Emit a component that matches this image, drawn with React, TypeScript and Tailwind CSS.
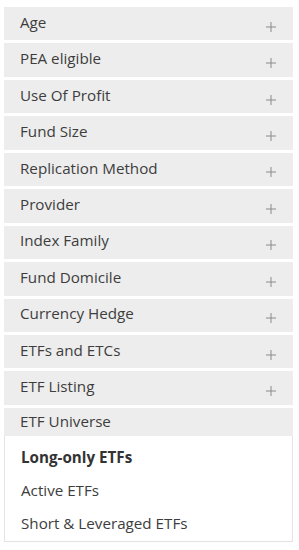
import React from "react";

const rows = [
  "Age",
  "PEA eligible",
  "Use Of Profit",
  "Fund Size",
  "Replication Method",
  "Provider",
  "Index Family",
  "Fund Domicile",
  "Currency Hedge",
  "ETFs and ETCs",
  "ETF Listing",
];

function Plus() {
  return (
    <svg width="10" height="10" viewBox="0 0 10 10" className="mt-[6px]">
      <path d="M5 0V10M0 5H10" stroke="#8a8a8a" strokeWidth="1" />
    </svg>
  );
}

export default function App() {
  return (
    <div
      className="w-[299px] h-[550px] bg-white pl-[4px] pt-[7px] text-[#3d3d3d]"
      style={{ fontFamily: '"Open Sans", "Liberation Sans", sans-serif' }}
    >
      <div className="w-[289px] flex flex-col gap-[3px]">
        {rows.map((r) => (
          <div
            key={r}
            className="h-[33.45px] bg-[#ededed] flex items-center justify-between pl-[16px] pr-[17px] text-[15.2px]"
          >
            <span className="-mt-[3px]">{r}</span>
            <Plus />
          </div>
        ))}
        <div className="border border-[#e3e3e3] border-t-0">
          <div className="h-[28px] bg-[#ededed] -mx-[1px] flex items-center pl-[16px] text-[15.2px]">
            <span>ETF Universe</span>
          </div>
          <div className="flex flex-col pl-[16px] pt-[5px] pb-[1px] text-[15.2px]">
            <div className="h-[33px] flex items-center font-bold text-[#333]">Long-only ETFs</div>
            <div className="h-[33px] flex items-center">Active ETFs</div>
            <div className="h-[33px] flex items-center">Short &amp; Leveraged ETFs</div>
          </div>
        </div>
      </div>
    </div>
  );
}
